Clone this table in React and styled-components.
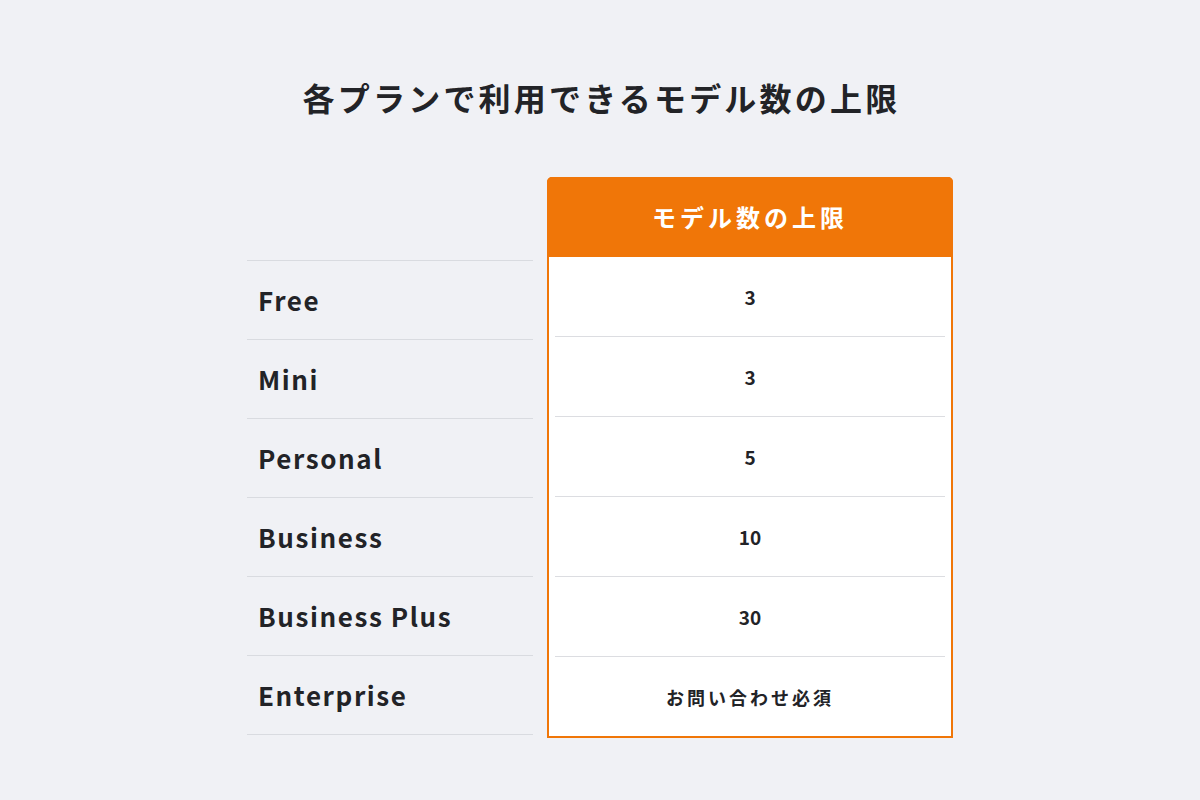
import React from 'react'
import styled, { createGlobalStyle } from 'styled-components'

const GlobalStyle = createGlobalStyle`
  html, body {
    margin: 0;
    padding: 0;
    background: #f0f1f5;
  }
  body {
    font-family: "Noto Sans CJK JP", "Noto Sans", sans-serif;
    color: #222327;
  }
`

const Page = styled.div`
  width: 1200px;
  height: 800px;
  display: flex;
  flex-direction: column;
  align-items: center;
  padding-top: 73px;
  box-sizing: border-box;
`

const Title = styled.h1`
  margin: 0 -3px 56px 0;
  font-size: 32px;
  line-height: 48px;
  font-weight: 700;
  letter-spacing: 3.2px;
  color: #222327;
`

const Table = styled.div`
  display: grid;
  grid-template-columns: 286px 406px;
  column-gap: 14px;
`

const PlanColumn = styled.div`
  display: flex;
  flex-direction: column;
  padding-top: 83px;
`

const PlanRow = styled.div`
  display: flex;
  align-items: center;
  padding-left: 11px;
  padding-bottom: 2px;
  height: 76px;
  border-bottom: 1px solid #d9dbe0;
  border-top: ${(p) => (p.first ? '1px solid #d9dbe0' : 'none')};
  font-size: 26px;
  font-weight: 700;
  letter-spacing: 1.6px;
  color: #222327;
`

const Card = styled.div`
  border: 2px solid #f07608;
  border-radius: 5px 5px 0 0;
  background: #fff;
  display: flex;
  flex-direction: column;
`

const CardHeader = styled.div`
  height: 80px;
  margin: -2px -2px 0;
  padding-bottom: 2px;
  box-sizing: border-box;
  border-radius: 5px 5px 0 0;
  background: #f07608;
  color: #fff;
  display: flex;
  align-items: center;
  justify-content: center;
  font-size: 24px;
  font-weight: 700;
  letter-spacing: 4px;
`

const CardBody = styled.div`
  padding: 0 6px;
  display: flex;
  flex-direction: column;
`

const ValueCell = styled.div`
  height: 79px;
  display: flex;
  align-items: center;
  justify-content: center;
  border-top: ${(p) => (p.first ? 'none' : '1px solid #dcdde1')};
  font-size: ${(p) => (p.small ? '18px' : '19px')};
  font-weight: 700;
  letter-spacing: ${(p) => (p.small ? '3px' : '0')};
  color: #222327;
`

const rows = [
  { plan: 'Free', value: '3' },
  { plan: 'Mini', value: '3' },
  { plan: 'Personal', value: '5' },
  { plan: 'Business', value: '10' },
  { plan: 'Business Plus', value: '30' },
  { plan: 'Enterprise', value: 'お問い合わせ必須', text: true },
]

export default function App() {
  return (
    <Page>
      <GlobalStyle />
      <Title>各プランで利用できるモデル数の上限</Title>
      <Table>
        <PlanColumn>
          {rows.map((r, i) => (
            <PlanRow key={r.plan} first={i === 0}>
              {r.plan}
            </PlanRow>
          ))}
        </PlanColumn>
        <Card>
          <CardHeader>モデル数の上限</CardHeader>
          <CardBody>
            {rows.map((r, i) => (
              <ValueCell key={r.plan} first={i === 0} small={r.text}>
                {r.value}
              </ValueCell>
            ))}
          </CardBody>
        </Card>
      </Table>
    </Page>
  )
}
